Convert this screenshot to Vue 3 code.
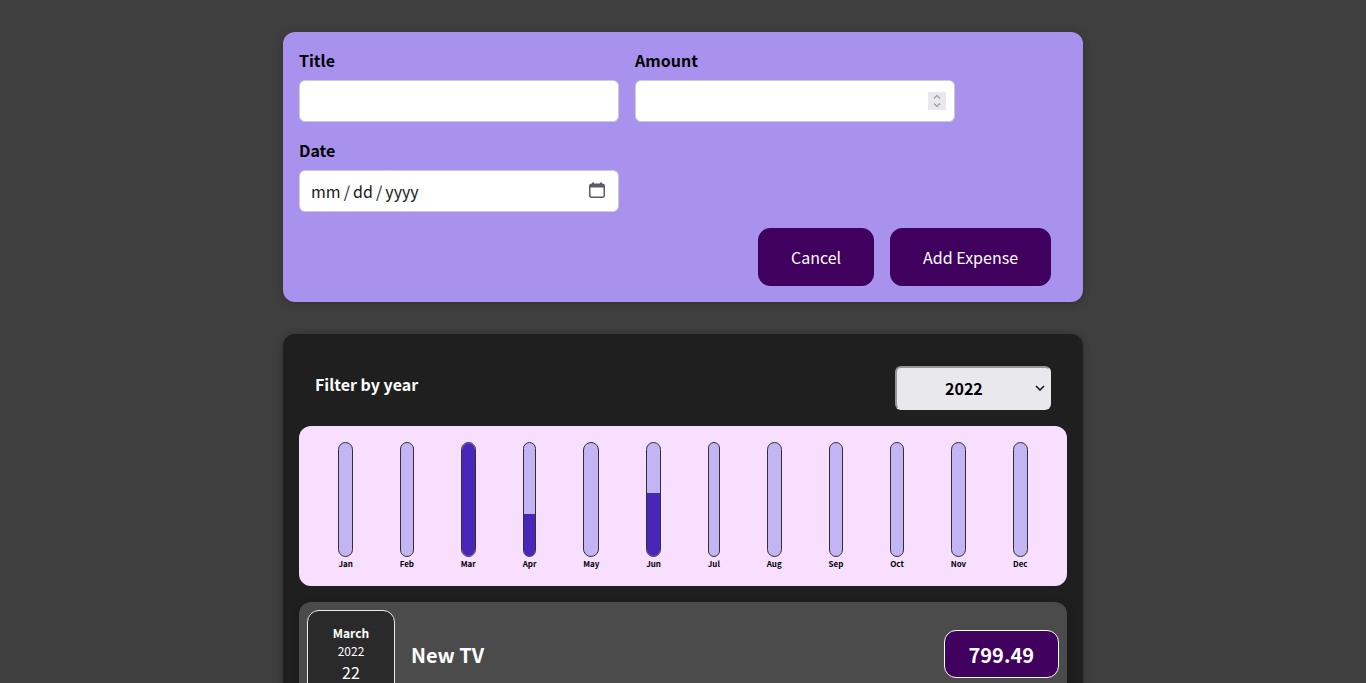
<template>
    <div class="new-expense">
        <form @submit.prevent>
            <div class="controls">
                <div class="control">
                    <label for="title">Title</label>
                    <input id="title" type="text" v-model="title" />
                </div>
                <div class="control">
                    <label for="amount">Amount</label>
                    <div class="field">
                        <input id="amount" type="text" inputmode="decimal" v-model="amount" />
                        <span class="spinner">
                            <svg width="18" height="18" viewBox="0 0 18 18" fill="none" stroke="#a3a3ad" stroke-width="1.4">
                                <path d="M6 6.5 9 3.5 12 6.5" />
                                <path d="M6 11.5 9 14.5 12 11.5" />
                            </svg>
                        </span>
                    </div>
                </div>
                <div class="control">
                    <label for="date">Date</label>
                    <div class="field">
                        <input id="date" class="date-input" type="text" placeholder="mm / dd / yyyy" v-model="date" />
                        <svg class="calendar" width="16" height="16" viewBox="0 0 16 16" fill="none">
                            <path d="M4 0.5V3M12 0.5V3" stroke="#5b5b66" stroke-width="2" />
                            <rect x="0.75" y="2.25" width="14.5" height="13" rx="2" stroke="#5b5b66" stroke-width="1.5" />
                            <path d="M1 3.5A1.5 1.5 0 0 1 2.5 2.5H13.5A1.5 1.5 0 0 1 15 3.5V5.5H1Z" fill="#5b5b66" />
                        </svg>
                    </div>
                </div>
            </div>
            <div class="actions">
                <button type="button">Cancel</button>
                <button type="submit">Add Expense</button>
            </div>
        </form>
    </div>

    <div class="expenses">
        <div class="filter">
            <label for="year">Filter by year</label>
            <div class="select-wrap">
                <select id="year" v-model="year">
                    <option>2022</option>
                    <option>2021</option>
                    <option>2020</option>
                    <option>2019</option>
                </select>
                <svg class="chevron" width="10" height="6" viewBox="0 0 10 6" fill="none" stroke="#111" stroke-width="1.5">
                    <path d="M1 1 5 5 9 1" />
                </svg>
            </div>
        </div>

        <div class="chart">
            <div class="chart-bar" v-for="bar in bars" :key="bar.label">
                <div class="chart-bar-inner">
                    <div class="chart-bar-fill" :style="{ height: fillHeight(bar.value) }"></div>
                </div>
                <div class="chart-bar-label">{{ bar.label }}</div>
            </div>
        </div>

        <div class="expense-item">
            <div class="expense-date">
                <div class="month">March</div>
                <div class="date-year">2022</div>
                <div class="day">22</div>
            </div>
            <div class="description">
                <h2>New TV</h2>
                <div class="price">799.49</div>
            </div>
        </div>
    </div>
</template>

<script setup>
import { ref } from "vue";

const title = ref("");
const amount = ref("");
const date = ref("");
const year = ref("2022");

const bars = [
    { label: "Jan", value: 0 },
    { label: "Feb", value: 0 },
    { label: "Mar", value: 799.49 },
    { label: "Apr", value: 294.67 },
    { label: "May", value: 0 },
    { label: "Jun", value: 450 },
    { label: "Jul", value: 0 },
    { label: "Aug", value: 0 },
    { label: "Sep", value: 0 },
    { label: "Oct", value: 0 },
    { label: "Nov", value: 0 },
    { label: "Dec", value: 0 },
];

const maxValue = Math.max(...bars.map((bar) => bar.value));
const fillHeight = (value) => Math.round((value / maxValue) * 100) + "%";
</script>

<style>
html,
body {
    background: #3f3f3f;
}
body {
    font-family: "Noto Sans CJK JP", "Noto Sans", sans-serif;
}
</style>

<style scoped>
* {
    box-sizing: border-box;
}

.new-expense {
    background: #a892ee;
    padding: 16px;
    margin: 32px auto;
    width: 800px;
    border-radius: 12px;
    box-shadow: 0 1px 8px rgba(0, 0, 0, 0.25);
}

.controls {
    display: flex;
    flex-wrap: wrap;
    gap: 16px;
    margin-bottom: 16px;
}

.control label {
    display: block;
    font-weight: bold;
    margin-bottom: 8px;
}

.field {
    position: relative;
    height: 42px;
}

.control input {
    display: block;
    font: inherit;
    height: 42px;
    padding: 8px;
    border-radius: 6px;
    border: 1px solid #ccc;
    width: 320px;
    background: #fff;
}

.date-input {
    padding-left: 11px !important;
}

.date-input::placeholder {
    color: #1a1a1a;
    opacity: 1;
    word-spacing: -0.5px;
}

.spinner {
    position: absolute;
    top: 12px;
    left: 293px;
    width: 18px;
    height: 18px;
    background: #e9e9ed;
    display: flex;
}

.calendar {
    position: absolute;
    top: 12px;
    left: 290px;
}

.actions {
    text-align: right;
}

.actions button {
    font: inherit;
    padding: 16px 32px;
    border: 1px solid #40005d;
    background: #40005d;
    color: #fff;
    border-radius: 12px;
    margin-right: 16px;
    cursor: pointer;
}

.expenses {
    padding: 16px;
    background: #1f1f1f;
    margin: 32px auto;
    width: 800px;
    border-radius: 12px;
    box-shadow: 0 1px 8px rgba(0, 0, 0, 0.25);
}

.filter {
    color: #fff;
    padding: 0 16px;
    margin: 16px 0;
    display: flex;
    align-items: center;
    justify-content: space-between;
}

.filter label {
    font-weight: bold;
    margin-bottom: 8px;
}

.select-wrap {
    position: relative;
    display: flex;
}

.filter select {
    appearance: none;
    font: inherit;
    font-weight: bold;
    line-height: 24px;
    width: 156px;
    height: 44px;
    padding: 8px 48px;
    border-radius: 6px;
    border: 2px solid;
    border-color: #96969c #e9e8ed #e9e8ed #96969c;
    background: #e9e8ed;
    color: #000;
}

.chevron {
    position: absolute;
    top: 19px;
    left: 140px;
    pointer-events: none;
}

.chart {
    padding: 16px;
    border-radius: 12px;
    background: #f8dfff;
    display: flex;
    justify-content: space-around;
    height: 160px;
}

.chart-bar {
    height: 100%;
    display: flex;
    flex-direction: column;
    align-items: center;
}

.chart-bar-inner {
    height: 100%;
    width: 100%;
    border: 1px solid #313131;
    border-radius: 12px;
    background: #c3b4f3;
    display: flex;
    flex-direction: column;
    justify-content: flex-end;
    overflow: hidden;
}

.chart-bar-fill {
    background: #4826b9;
    width: 100%;
}

.chart-bar-label {
    font-weight: bold;
    font-size: 8px;
    line-height: 13px;
    text-align: center;
}

.expense-item {
    display: flex;
    align-items: center;
    justify-content: space-between;
    padding: 8px;
    margin: 16px 0;
    border-radius: 12px;
    background: #4b4b4b;
    box-shadow: 0 2px 8px rgba(0, 0, 0, 0.25);
}

.expense-date {
    display: flex;
    flex-direction: column;
    align-items: center;
    justify-content: center;
    width: 88px;
    height: 88px;
    border: 1px solid #ececec;
    background: #2a2a2a;
    color: #fff;
    border-radius: 12px;
}

.month {
    font-size: 12px;
    line-height: 18px;
    font-weight: bold;
}

.date-year {
    font-size: 12px;
    line-height: 18px;
}

.day {
    font-size: 16px;
    line-height: 24px;
}

.description {
    display: flex;
    align-items: center;
    justify-content: flex-start;
    flex: 1;
    gap: 16px;
}

.description h2 {
    color: #fff;
    font-size: 20px;
    flex: 1;
    margin: 0 16px;
}

.price {
    font-size: 20px;
    line-height: 30px;
    font-weight: bold;
    color: #fff;
    background: #40005d;
    border: 1px solid #fff;
    padding: 9px 24px 7px;
    border-radius: 12px;
}
</style>
